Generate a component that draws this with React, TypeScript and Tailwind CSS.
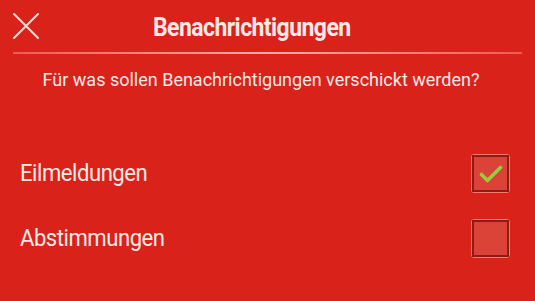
import { useState } from "react";

function CheckBox({ checked, onClick }: { checked: boolean; onClick: () => void }) {
  return (
    <button
      onClick={onClick}
      className="w-[39px] h-[39px] rounded-[3px] border-[1.5px] border-[#f27a70] p-0 flex"
    >
      <span className="flex-1 flex items-center justify-center border-2 border-[#8f1c14] bg-[#db4339]">
        {checked && (
          <svg width="24" height="20" viewBox="0 0 24 20" fill="none">
            <path d="M2.5 10.5l6 6L21.5 3.5" stroke="#93cf3c" strokeWidth="3.6" strokeLinecap="round" strokeLinejoin="round" />
          </svg>
        )}
      </span>
    </button>
  );
}

export default function App() {
  const [breaking, setBreaking] = useState(true);
  const [votes, setVotes] = useState(false);

  return (
    <div className="w-[535px] h-[301px] bg-[#d9221a] text-[#fbe9e6] font-['Roboto',sans-serif] overflow-hidden">
      {/* header */}
      <div className="relative h-[52px] flex items-center justify-center">
        <button className="absolute left-[12px] top-[12px] w-[28px] h-[28px]">
          <svg width="28" height="28" viewBox="0 0 28 28" fill="none">
            <path d="M2 2l24 24M26 2L2 26" stroke="#f8dcd8" strokeWidth="2" strokeLinecap="round" />
          </svg>
        </button>
        <h1 className="text-[25.5px] font-bold tracking-[-0.6px] scale-x-[0.9] mt-[2px] mr-[31px]">Benachrichtigungen</h1>
      </div>
      <div className="mx-[13px] h-[2px] bg-gradient-to-r from-[#ee5a50] via-[#ffb0a8] to-[#ee5a50]" />

      <p className="text-center text-[18px] mt-[14px] leading-[24px] pr-[13px]">
        Für was sollen Benachrichtigungen verschickt werden?
      </p>

      <div className="mt-[62px] pl-[20px] pr-[25px] flex flex-col gap-[26px]">
        <div className="flex items-center justify-between">
          <span className="text-[24.5px] tracking-[-0.5px] origin-left scale-x-[0.9]">Eilmeldungen</span>
          <CheckBox checked={breaking} onClick={() => setBreaking(!breaking)} />
        </div>
        <div className="flex items-center justify-between">
          <span className="text-[24.5px] tracking-[-0.5px] origin-left scale-x-[0.9]">Abstimmungen</span>
          <CheckBox checked={votes} onClick={() => setVotes(!votes)} />
        </div>
      </div>
    </div>
  );
}
